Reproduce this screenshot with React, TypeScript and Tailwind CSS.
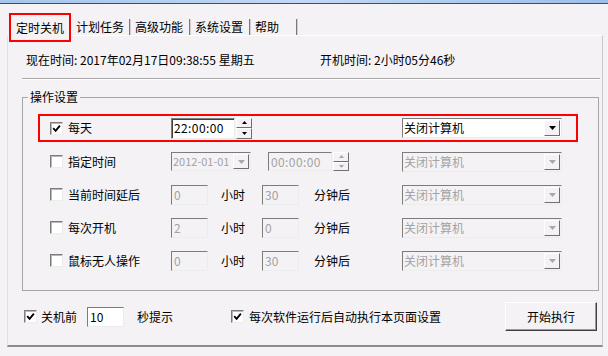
import React from "react";

const sunkenBorder =
  "border border-t-[#7c7c7c] border-l-[#7c7c7c] border-r-[#ececec] border-b-[#ececec]";
const raisedBorder =
  "border border-t-[#ffffff] border-l-[#ffffff] border-r-[#6e6e6e] border-b-[#6e6e6e]";

function Check({ checked }: { checked?: boolean }) {
  return (
    <div
      className={`w-[13px] h-[13px] bg-white shrink-0 flex items-center justify-center ${sunkenBorder} shadow-[inset_1px_1px_0_#b8b8b8]`}
    >
      {checked && (
        <svg width="9" height="9" viewBox="0 0 9 9">
          <path d="M1.2 4.2 L3.6 6.8 L7.9 1.6" stroke="#000" strokeWidth="1.9" fill="none" />
        </svg>
      )}
    </div>
  );
}

function Tri({ down = true, color = "#000", w = 7, h = 4 }: { down?: boolean; color?: string; w?: number; h?: number }) {
  return (
    <svg width={w} height={h} viewBox={`0 0 ${w} ${h}`}>
      {down ? (
        <path d={`M0 0 H${w} L${w / 2} ${h} Z`} fill={color} />
      ) : (
        <path d={`M0 ${h} H${w} L${w / 2} 0 Z`} fill={color} />
      )}
    </svg>
  );
}

function Select({ disabled }: { disabled?: boolean }) {
  return (
    <div
      className={`w-[160px] h-[20px] flex items-center ${sunkenBorder} ${
        disabled ? "bg-[#f4f2f4] text-[#a3a3a3]" : "bg-white text-black"
      }`}
    >
      <span className="flex-1 pl-[1px] leading-none whitespace-nowrap">关闭计算机</span>
      <div
        className={`w-[16px] h-[16px] mr-[1px] flex items-center justify-center bg-[#f4f2f4] ${raisedBorder}`}
      >
        <Tri color={disabled ? "#a8a8a8" : "#000"} />
      </div>
    </div>
  );
}

function Spinner({ disabled, h = 21 }: { disabled?: boolean; h?: number }) {
  const c = disabled ? "#a8a8a8" : "#000";
  return (
    <div className={`w-[16px] ml-[1px] flex flex-col ${h === 21 ? "h-[21px]" : "h-[19px]"}`}>
      <div className={`flex-1 flex items-center justify-center bg-[#f4f2f4] ${raisedBorder}`}>
        <Tri down={false} color={c} w={5} h={3} />
      </div>
      <div className={`flex-1 flex items-center justify-center bg-[#f4f2f4] ${raisedBorder}`}>
        <Tri color={c} w={5} h={3} />
      </div>
    </div>
  );
}

function SmallInput({ value, disabled }: { value: string; disabled?: boolean }) {
  return (
    <div
      className={`w-[37px] h-[20px] flex items-center pl-[2px] leading-none ${sunkenBorder} ${
        disabled ? "bg-[#f4f2f4] text-[#a3a3a3]" : "bg-white text-black"
      }`}
    >
      {value}
    </div>
  );
}

function DelayRow({ label, h1, m1 }: { label: string; h1: string; m1: string }) {
  return (
    <div className="ml-[17px] pl-[10px] h-[33px] flex items-center">
      <Check />
      <span className="ml-[5px] w-[103px] leading-none whitespace-nowrap">{label}</span>
      <div className="w-[231px] flex items-center">
        <SmallInput value={h1} disabled />
        <span className="ml-[13px] leading-none">小时</span>
        <div className="ml-[17px]">
          <SmallInput value={m1} disabled />
        </div>
        <span className="ml-[15px] leading-none">分钟后</span>
      </div>
      <Select disabled />
    </div>
  );
}

export default function App() {
  return (
    <div className="w-[608px] h-[356px] bg-[#f4f2f4] overflow-hidden text-[12px] text-black font-['Noto_Sans_CJK_SC','Liberation_Sans',sans-serif]">
      <div className="h-[3px] bg-gradient-to-r from-[#a6c4ec] via-[#c3d8f3] to-[#9dbde9]" />
      <div className="h-px bg-[#33507c]" />

      {/* tabs */}
      <div className="h-[31px] pt-[9px] pl-[9px] flex items-start">
        <div className="relative z-10 w-[62px] h-[29px] border-2 border-[#ff0000] bg-[#f4f2f4] flex items-center justify-center leading-none">
          定时关机
        </div>
        {[
          ["计划任务", "w-[59px]"],
          ["高级功能", "w-[60px]"],
          ["系统设置", "w-[60px]"],
          ["帮助", "w-[47px]"],
        ].map(([t, w]) => (
          <div
            key={t}
            className={`${w} mt-[6px] h-[16px] pl-[5px] flex items-center leading-none border-r border-r-[#7a7a7a] shadow-[1px_0_0_#cfcfcf]`}
          >
            {t}
          </div>
        ))}
      </div>

      {/* panel */}
      <div className="ml-[7px] w-[596px] h-[312px] border-t border-l border-r border-b-2 border-t-[#ffffff] border-l-[#e2e0e2] border-r-[#c8c8c8] border-b-[#8c8c8c] pl-[14px]">
        <div className="mt-[14px] h-[20px] flex items-center leading-none whitespace-nowrap">
          <span className="ml-[4px] w-[294px]">现在时间: 2017年02月17日09:38:55 星期五</span>
          <span>开机时间: 2小时05分46秒</span>
        </div>
        <div className="mt-[8px] w-[578px] h-[2px] border-t border-b border-t-[#a8a8a8] border-b-[#ffffff]" />

        <fieldset className="mt-[9px] w-[577px] h-[202px] border border-[#a6a6a6]">
          <legend className="ml-[5px] px-[2px] leading-[16px]">操作设置</legend>

          <div className="mt-[9px] ml-[15px] w-[540px] h-[28px] border-2 border-[#ff0000] pl-[10px] flex items-center">
            <Check checked />
            <span className="ml-[5px] w-[103px] leading-none">每天</span>
            <div className="w-[231px] flex items-center">
              <div className={`w-[64px] h-[21px] bg-white flex items-center pl-[2px] leading-none tracking-[0.4px] ${sunkenBorder} shadow-[inset_1px_1px_0_#404040]`}>
                22:00:00
              </div>
              <Spinner />
            </div>
            <Select />
          </div>

          <div className="mt-[3px] ml-[17px] pl-[10px] h-[33px] flex items-center">
            <Check />
            <span className="ml-[5px] w-[103px] leading-none">指定时间</span>
            <div className="w-[231px] flex items-center">
              <div className={`w-[80px] h-[19px] flex items-center bg-[#f4f2f4] text-[#a3a3a3] leading-none whitespace-nowrap ${sunkenBorder}`}>
                <span className="flex-1 pl-[1px] text-[11px]">2012-01-01</span>
                <div className={`w-[16px] h-[15px] mr-[1px] shrink-0 flex items-center justify-center bg-[#f4f2f4] ${raisedBorder}`}>
                  <Tri color="#a8a8a8" />
                </div>
              </div>
              <div className={`ml-[17px] w-[64px] h-[19px] flex items-center pl-[2px] bg-[#f4f2f4] text-[#a3a3a3] leading-none tracking-[0.4px] ${sunkenBorder}`}>
                00:00:00
              </div>
              <Spinner disabled h={19} />
            </div>
            <Select disabled />
          </div>

          <DelayRow label="当前时间延后" h1="0" m1="30" />
          <DelayRow label="每次开机" h1="2" m1="0" />
          <DelayRow label="鼠标无人操作" h1="0" m1="30" />
        </fieldset>

        <div className="mt-[11px] w-[575px] h-[29px] flex items-center whitespace-nowrap">
          <div className="ml-[2px]">
            <Check checked />
          </div>
          <span className="ml-[4px] leading-none">关机前</span>
          <div className="ml-[10px]">
            <SmallInput value="10" />
          </div>
          <span className="ml-[13px] leading-none">秒提示</span>
          <div className="ml-[58px]">
            <Check checked />
          </div>
          <span className="ml-[5px] leading-none">每次软件运行后自动执行本页面设置</span>
          <button
            className={`ml-auto w-[92px] h-[29px] bg-[#f4f2f4] flex items-center justify-center leading-none border border-t-[#ffffff] border-l-[#ffffff] border-r-[#404040] border-b-[#404040] shadow-[inset_-1px_-1px_0_#9a9a9a]`}
          >
            开始执行
          </button>
        </div>
      </div>
    </div>
  );
}
